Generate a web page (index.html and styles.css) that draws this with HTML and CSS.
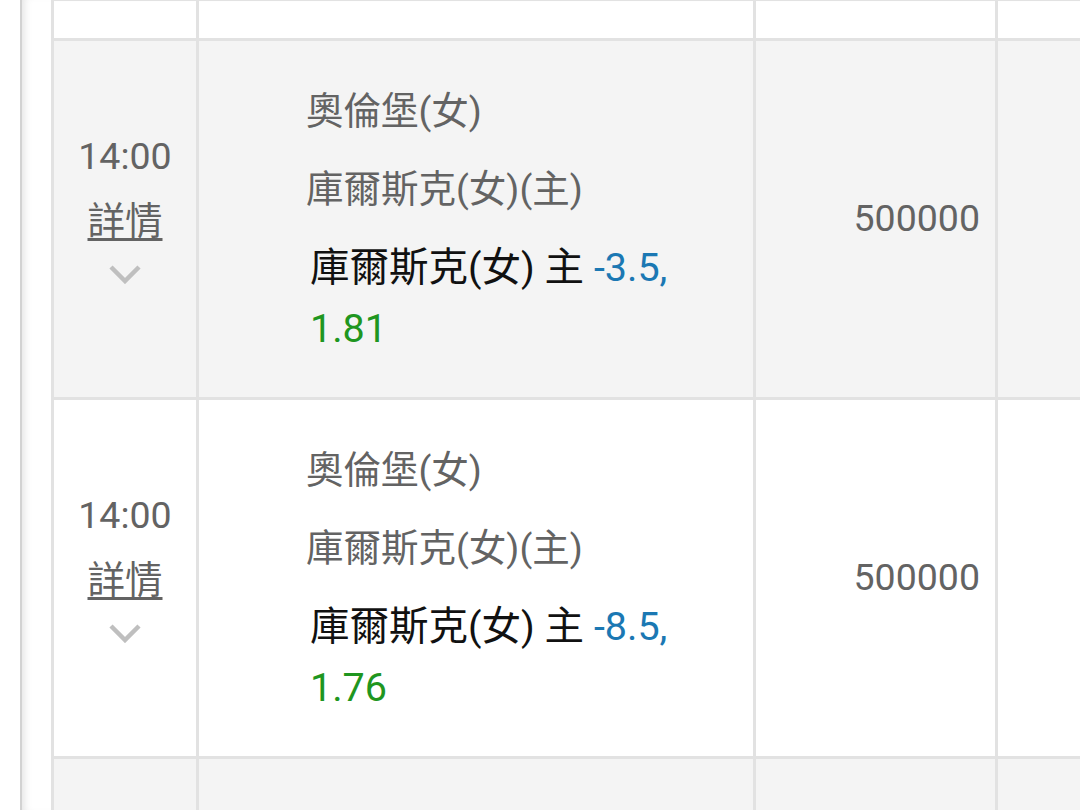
FILE: index.html
```html
<!DOCTYPE html>
<html lang="zh-TW">

<head>
    <meta charset="UTF-8">
    <meta name="viewport" content="width=device-width, initial-scale=1.0">
    <title>賽事列表</title>
    <link rel="stylesheet" href="styles.css">
</head>

<body>
    <div class="panel">
        <table class="match-table">
            <colgroup>
                <col class="col-time">
                <col class="col-team">
                <col class="col-amount">
                <col class="col-extra">
            </colgroup>
            <tbody>
                <tr class="row-spacer">
                    <td></td>
                    <td></td>
                    <td></td>
                    <td></td>
                </tr>
                <tr class="row-odd">
                    <td class="cell-time">
                        <div class="time">14:00</div>
                        <a class="detail" href="#">詳情</a>
                        <svg class="chevron" width="34" height="20" viewBox="0 0 34 20">
                            <path d="M3 3 L17 17 L31 3" fill="none" stroke="#bfbfbf" stroke-width="4.5" />
                        </svg>
                    </td>
                    <td class="cell-team">
                        <div class="team">奧倫堡(女)</div>
                        <div class="team">庫爾斯克(女)(主)</div>
                        <div class="bet">庫爾斯克(女) 主 <span class="handicap">-3.5,</span> <span class="odds">1.81</span></div>
                    </td>
                    <td class="cell-amount">500000</td>
                    <td></td>
                </tr>
                <tr>
                    <td class="cell-time">
                        <div class="time">14:00</div>
                        <a class="detail" href="#">詳情</a>
                        <svg class="chevron" width="34" height="20" viewBox="0 0 34 20">
                            <path d="M3 3 L17 17 L31 3" fill="none" stroke="#bfbfbf" stroke-width="4.5" />
                        </svg>
                    </td>
                    <td class="cell-team">
                        <div class="team">奧倫堡(女)</div>
                        <div class="team">庫爾斯克(女)(主)</div>
                        <div class="bet">庫爾斯克(女) 主 <span class="handicap">-8.5,</span> <span class="odds">1.76</span></div>
                    </td>
                    <td class="cell-amount">500000</td>
                    <td></td>
                </tr>
                <tr class="row-odd">
                    <td class="cell-empty"></td>
                    <td></td>
                    <td></td>
                    <td></td>
                </tr>
            </tbody>
        </table>
    </div>
</body>

</html>
```

FILE: styles.css
```css
body {
    margin: 0;
    padding: 0;
    background-color: #fff;
    font-family: Roboto, "Noto Sans CJK TC", sans-serif;
    overflow: hidden;
    height: 810px;
}

.panel {
    margin-left: 20px;
    padding-left: 29px;
    border-left: 2px solid #d2d2d2;
    box-shadow: inset 8px 0 8px -6px rgba(0, 0, 0, 0.12);
    height: 810px;
    overflow: hidden;
}

.match-table {
    border-collapse: collapse;
    table-layout: fixed;
    width: 1100px;
    margin-top: -2px;
}

.match-table td {
    border: 3px solid #e2e2e2;
    padding: 0;
    vertical-align: middle;
}

.col-time {
    width: 145px;
}

.col-team {
    width: 557px;
}

.col-amount {
    width: 242px;
}

.row-spacer td {
    height: 37px;
}

.row-odd td {
    background-color: #f4f4f4;
}

.cell-time {
    height: 356px;
    text-align: center;
    color: #636363;
    font-size: 37.5px;
}

.cell-empty {
    height: 100px;
}

.time {
    line-height: 50px;
}

.detail {
    display: block;
    margin-top: 15px;
    line-height: 50px;
    color: #636363;
    text-decoration: underline;
    text-underline-offset: 4px;
}

.chevron {
    display: block;
    margin: 18px auto 24px;
}

.cell-team {
    padding-left: 107px !important;
    padding-right: 40px !important;
    padding-top: 2px !important;
    font-size: 37.5px;
}

.team {
    color: #636363;
    line-height: 60px;
    margin-bottom: 18px;
}

.bet {
    color: #111;
    font-size: 39.5px;
    line-height: 61px;
    margin-top: 9px;
    padding-left: 4px;
}

.handicap {
    color: #1b78b3;
}

.odds {
    color: #1f961f;
}

.cell-amount {
    text-align: right;
    padding-right: 15px !important;
    padding-bottom: 3px !important;
    color: #636363;
    font-size: 37.5px;
}
```
